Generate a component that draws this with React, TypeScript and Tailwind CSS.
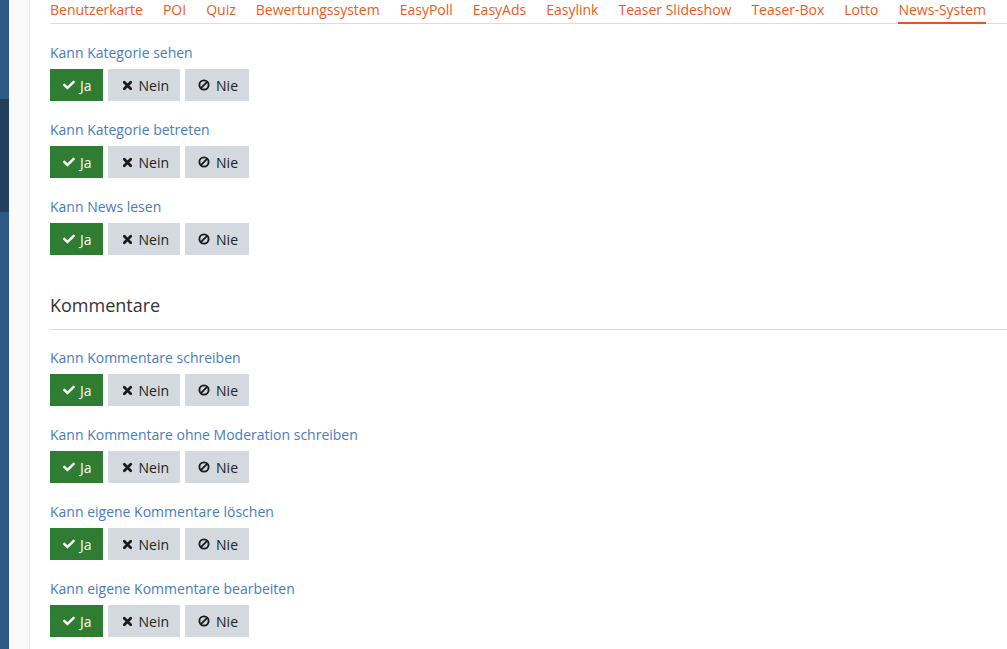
import React from "react";
import { FaCheck } from "react-icons/fa";

const tabs = [
  "Benutzerkarte",
  "POI",
  "Quiz",
  "Bewertungssystem",
  "EasyPoll",
  "EasyAds",
  "Easylink",
  "Teaser Slideshow",
  "Teaser-Box",
  "Lotto",
  "News-System",
];

function CrossIcon() {
  return (
    <svg viewBox="0 0 12 12" className="w-[11px] h-[11px]">
      <path
        d="M2.5 2.5 L9.5 9.5 M9.5 2.5 L2.5 9.5"
        stroke="#1a1a1a"
        strokeWidth="3"
        strokeLinecap="round"
        fill="none"
      />
    </svg>
  );
}

function BanIcon() {
  return (
    <svg viewBox="0 0 12 12" className="w-[12px] h-[12px]">
      <circle cx="6" cy="6" r="4.6" stroke="#1a1a1a" strokeWidth="1.9" fill="none" />
      <path d="M2.9 9.1 L9.1 2.9" stroke="#1a1a1a" strokeWidth="1.9" fill="none" />
    </svg>
  );
}

function Choice({ label }: { label: string }) {
  return (
    <div className="mb-[19px]">
      <div className="text-[14px] leading-[20px] text-[#4a7bba] mb-[6px]">{label}</div>
      <div className="flex gap-[5px]">
        <button className="h-[32px] pl-[13px] pr-[11px] flex items-center gap-[5px] bg-[#2e7d32] text-white text-[14px]">
          <FaCheck className="w-[12px] h-[12px]" />
          <span>Ja</span>
        </button>
        <button className="h-[32px] pl-[14px] pr-[11px] flex items-center gap-[6px] bg-[#d3d9de] text-[#222] text-[14px]">
          <CrossIcon />
          <span>Nein</span>
        </button>
        <button className="h-[32px] pl-[13px] pr-[11px] flex items-center gap-[6px] bg-[#d3d9de] text-[#222] text-[14px]">
          <BanIcon />
          <span>Nie</span>
        </button>
      </div>
    </div>
  );
}

export default function App() {
  return (
    <div
      className="h-[649px] w-[1007px] overflow-hidden flex bg-white"
      style={{ fontFamily: '"Open Sans", "Noto Sans", sans-serif' }}
    >
      {/* sidebar edge */}
      <div className="w-[9px] flex flex-col shrink-0">
        <div className="h-[99px] bg-[#2c5a85]" />
        <div className="h-[113px] bg-[#223f5f]" />
        <div className="flex-1 bg-[#2c5a85]" />
      </div>
      <div className="w-[21px] shrink-0 bg-[#f9f9f9] border-r border-[#e6eaef]" />

      <main className="flex-1 pl-[20px]">
        <nav className="flex gap-[20px] border-b border-[#dcdcdc] h-[24px]">
          {tabs.map((t) => (
            <span
              key={t}
              className={
                "text-[14px] leading-[20px] text-[#ea5b1b] whitespace-nowrap h-[24px] " +
                (t === "News-System" ? "border-b-2 border-[#e8531a]" : "")
              }
            >
              {t}
            </span>
          ))}
        </nav>

        <div className="pt-[19px]">
          <Choice label="Kann Kategorie sehen" />
          <Choice label="Kann Kategorie betreten" />
          <Choice label="Kann News lesen" />

          <h3 className="mt-[37px] text-[18px] leading-[26px] text-[#333] pb-[11px] border-b border-[#dcdcdc] mb-[18px]">
            Kommentare
          </h3>

          <Choice label="Kann Kommentare schreiben" />
          <Choice label="Kann Kommentare ohne Moderation schreiben" />
          <Choice label="Kann eigene Kommentare löschen" />
          <Choice label="Kann eigene Kommentare bearbeiten" />
        </div>
      </main>
    </div>
  );
}
